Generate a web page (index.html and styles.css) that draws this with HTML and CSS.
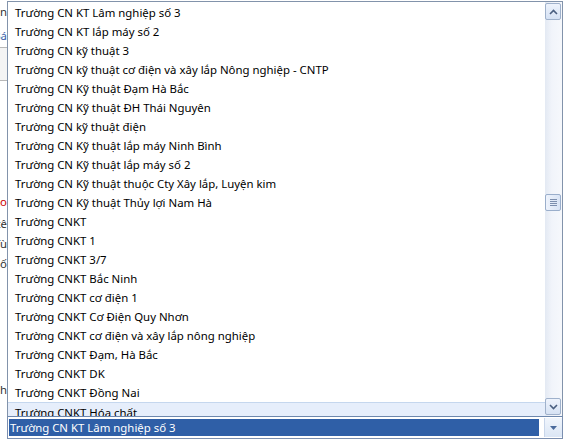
FILE: index.html
```html
<!DOCTYPE html>
<html lang="vi">
<head>
    <meta charset="UTF-8">
    <title>Chọn trường</title>
    <link rel="stylesheet" href="styles.css">
</head>
<body>
<div class="page">
    <div class="side">
        <div class="side-row" style="height:23px"><span>n</span></div>
        <div class="side-row link" style="height:24px"><span>Bá</span></div>
        <div class="side-band" style="height:32px"></div>
        <div class="side-band alt" style="height:108px"></div>
        <div class="side-row red" style="height:24px"><span>Lo</span></div>
        <div class="side-row" style="height:20px"><span>tê</span></div>
        <div class="side-row" style="height:20px"><span>Tù</span></div>
        <div class="side-row" style="height:20px"><span>ố</span></div>
        <div class="side-row" style="height:106px"></div>
        <div class="side-row" style="height:20px"><span>Gh</span></div>
    </div>
</div>

<div class="combo">
    <div class="dropdown">
        <ul class="list">
            <li>Trường CN KT Lâm nghiệp số 3</li>
            <li>Trường CN KT lắp máy số 2</li>
            <li>Trường CN kỹ thuật 3</li>
            <li>Trường CN kỹ thuật cơ điện và xây lắp Nông nghiệp - CNTP</li>
            <li>Trường CN Kỹ thuật Đạm Hà Bắc</li>
            <li>Trường CN Kỹ thuật ĐH Thái Nguyên</li>
            <li>Trường CN kỹ thuật điện</li>
            <li>Trường CN Kỹ thuật lắp máy Ninh Bình</li>
            <li>Trường CN Kỹ thuật lắp máy số 2</li>
            <li>Trường CN Kỹ thuật thuộc Cty Xây lắp, Luyện kim</li>
            <li>Trường CN Kỹ thuật Thủy lợi Nam Hà</li>
            <li>Trường CNKT</li>
            <li>Trường CNKT 1</li>
            <li>Trường CNKT 3/7</li>
            <li>Trường CNKT Bắc Ninh</li>
            <li>Trường CNKT cơ điện 1</li>
            <li>Trường CNKT Cơ Điện Quy Nhơn</li>
            <li>Trường CNKT cơ điện và xây lắp nông nghiệp</li>
            <li>Trường CNKT Đạm, Hà Bắc</li>
            <li>Trường CNKT DK</li>
            <li>Trường CNKT Đồng Nai</li>
            <li class="hover">Trường CNKT Hóa chất</li>
        </ul>
        <div class="scrollbar">
            <div class="sb-btn">
                <svg width="9" height="6" viewBox="0 0 9 6"><path d="M1 5 L4.5 1.5 L8 5" fill="none" stroke="#4a5f80" stroke-width="1.6"/></svg>
            </div>
            <div class="sb-track">
                <div class="sb-thumb" style="margin-top:173px">
                    <i></i><i></i><i></i><i></i>
                </div>
            </div>
            <div class="sb-btn">
                <svg width="9" height="6" viewBox="0 0 9 6"><path d="M1 1 L4.5 4.5 L8 1" fill="none" stroke="#4a5f80" stroke-width="1.6"/></svg>
            </div>
        </div>
    </div>
    <div class="select">
        <div class="value">Trường CN KT Lâm nghiệp số 3</div>
        <div class="drop-btn">
            <svg width="7" height="4" viewBox="0 0 7 4"><path d="M0 0 H7 L3.5 4 Z" fill="#4a6a9c"/></svg>
        </div>
    </div>
</div>
</body>
</html>
```

FILE: styles.css
```css
body, div, ul, li {
    margin: 0;
    padding: 0;
}

ul {
    list-style-type: none;
}

body {
    width: 568px;
    height: 446px;
    overflow: hidden;
    background: #fff;
    font: 11.4px/19px "Noto Sans", "Liberation Sans", sans-serif;
    color: #000;
}

.page {
    height: 446px;
    background: #fff;
}

.side {
    width: 7px;
    overflow: hidden;
}

.side-row {
    display: flex;
    align-items: center;
    justify-content: flex-end;
    white-space: nowrap;
    color: #333;
}

.side-row.link {
    color: #3a5fa8;
}

.side-row.red {
    color: #c00;
}

.side-band {
    border-top: 1px solid #b8b8b8;
    background: #f4f4f4;
}

.side-band.alt {
    background: #fff;
}

.combo {
    position: absolute;
    left: 7px;
    top: 1px;
    width: 556px;
}

.dropdown {
    display: flex;
    height: 414px;
    border: 1px solid #8293ab;
    border-bottom-color: #6d87ad;
    background: #fff;
    overflow: hidden;
}

.list {
    flex: 1;
    padding-top: 1px;
}

.list li {
    height: 19px;
    padding-left: 7px;
    white-space: nowrap;
}

.list li.hover {
    background: #e6eefb;
    border-top: 1px solid #c5d7ee;
    height: 18px;
}

.scrollbar {
    width: 17px;
    display: flex;
    flex-direction: column;
    background: linear-gradient(to right, #e3e9f3, #f1f4fa 40%, #f6f8fc);
}

.sb-btn {
    height: 15px;
    margin: 1px 1px 1px 0;
    border: 1px solid #9fb1cb;
    border-radius: 2px;
    background: linear-gradient(to bottom, #eef3fc, #d6e2f4);
    display: flex;
    align-items: center;
    justify-content: center;
}

.sb-track {
    flex: 1;
}

.sb-thumb {
    height: 15px;
    margin-right: 1px;
    border: 1px solid #9aaecb;
    border-radius: 2px;
    background: linear-gradient(to right, #eef3fc, #d9e4f5);
    display: flex;
    flex-direction: column;
    justify-content: center;
    align-items: center;
    gap: 1px;
}

.sb-thumb i {
    display: block;
    width: 7px;
    height: 1px;
    background: #7d8fae;
}

.select {
    display: flex;
    height: 21px;
    border: 1px solid #7b8fb0;
    border-top: 0;
    background: #fff;
}

.value {
    flex: 1;
    margin: 2px 0 2px 1px;
    padding-left: 1px;
    background: #2f5fa7;
    color: #fff;
    line-height: 17px;
    white-space: nowrap;
}

.drop-btn {
    width: 17px;
    margin: 1px 0 1px 5px;
    background: linear-gradient(to bottom, #f0f5fc, #dbe6f5);
    border-left: 1px solid #c9d6ea;
    display: flex;
    align-items: center;
    justify-content: center;
}
```
